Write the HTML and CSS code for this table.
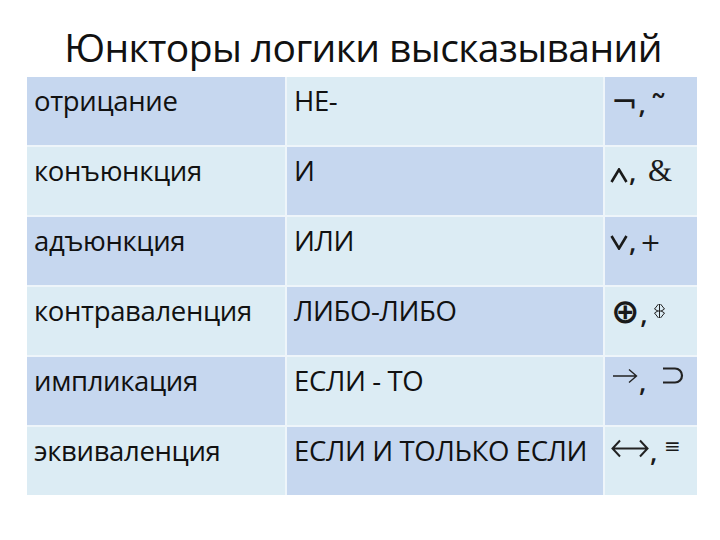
FILE: index.html
```html
<!DOCTYPE html>
<html lang="ru">
<head>
<meta charset="utf-8">
<link rel="stylesheet" href="styles.css">
</head>
<body>
<h1 class="title">Юнкторы логики высказываний</h1>
<div class="table">
  <div class="cell dark">отрицание</div>
  <div class="cell light">НЕ-</div>
  <div class="cell dark sym"><span class="s-not">¬</span><span class="comma">,</span><span class="s-tilde">˜</span></div>

  <div class="cell light">конъюнкция</div>
  <div class="cell dark">И</div>
  <div class="cell light sym"><svg class="s-and" width="18" height="15" viewBox="0 0 18 15"><path d="M1.5 14 L9 1.5 L16.5 14" fill="none" stroke="#1a1a1a" stroke-width="2.6"/></svg><span class="comma">,</span><span class="s-amp">&amp;</span></div>

  <div class="cell dark">адъюнкция</div>
  <div class="cell light">ИЛИ</div>
  <div class="cell dark sym"><svg class="s-or" width="18" height="15" viewBox="0 0 18 15"><path d="M1.5 1 L9 13.5 L16.5 1" fill="none" stroke="#1a1a1a" stroke-width="2.6"/></svg><span class="comma">,</span><span class="s-plus">+</span></div>

  <div class="cell light">контраваленция</div>
  <div class="cell dark">ЛИБО-ЛИБО</div>
  <div class="cell light sym"><span class="s-oplus">⊕</span><span class="comma">,</span><svg class="s-neq" width="13" height="16" viewBox="0 0 13 16"><path d="M5.5 1 L1.5 6 L5.5 8.5 M7.5 1 L11.5 6 L7.5 8.5 M5.5 7.5 L1.5 10 L5.5 15 M7.5 7.5 L11.5 10 L7.5 15 M6.5 1 L6.5 15" fill="none" stroke="#222" stroke-width="1"/></svg></div>

  <div class="cell dark">импликация</div>
  <div class="cell light">ЕСЛИ - ТО</div>
  <div class="cell dark sym"><svg class="s-arr" width="26" height="16" viewBox="0 0 26 16"><path d="M1 8 L24 8 M17 1.5 L24.5 8 L17 14.5" fill="none" stroke="#222" stroke-width="1.4"/></svg><span class="comma">,</span><svg class="s-sup" width="23" height="17" viewBox="0 0 23 17"><path d="M1 1.5 L13 1.5 A7 7 0 0 1 13 15.5 L1 15.5" fill="none" stroke="#222" stroke-width="2.2"/></svg></div>

  <div class="cell light">эквиваленция</div>
  <div class="cell dark">ЕСЛИ И ТОЛЬКО ЕСЛИ</div>
  <div class="cell light sym"><svg class="s-iff" width="38" height="19" viewBox="0 0 38 19"><path d="M9 1.5 L1.5 9.5 L9 17.5 M29 1.5 L36.5 9.5 L29 17.5 M1.5 9.5 L36.5 9.5" fill="none" stroke="#222" stroke-width="2"/></svg><span class="comma">,</span><span class="s-eq">≡</span></div>
</div>
</body>
</html>
```
FILE: styles.css
```css
html, body {
  margin: 0;
  padding: 0;
  background: #ffffff;
}
body {
  width: 720px;
  height: 540px;
  font-family: "Open Sans", "Noto Sans", sans-serif;
  color: #111;
}
.title {
  margin: 0;
  padding-top: 27px;
  height: 77px;
  box-sizing: border-box;
  font-weight: normal;
  font-size: 39px;
  line-height: 40px;
  text-align: center;
  padding-left: 6px;
  letter-spacing: -0.6px;
}
.table {
  margin-left: 27px;
  width: 670px;
  display: grid;
  grid-template-columns: 258px 316px 92px;
  grid-auto-rows: 68px;
  gap: 2px;
  background: #eef5fa;
}
.cell {
  font-size: 27.5px;
  line-height: 32px;
  padding: 8px 0 0 7px;
  letter-spacing: -0.35px;
  white-space: nowrap;
}
.dark { background: #c6d7ef; }
.light { background: #dcecf4; }
.sym {
  padding-left: 6px;
  font-family: "DejaVu Sans", sans-serif;
  font-size: 26px;
  color: #1a1a1a;
  display: flex;
  align-items: baseline;
}
.comma { font-family: "Open Sans", sans-serif; font-size: 27px; font-weight: 600; margin-left: 1px; }
.s-not { font-size: 32px; font-weight: normal; }
.s-tilde { font-size: 36px; margin-left: 4px; position: relative; top: 8px; }
.s-and { align-self: flex-start; margin-top: 13px; margin-left: -1px; }
.s-amp { font-family: "Liberation Serif", serif; font-size: 31px; margin-left: 12px; }
.s-or { align-self: flex-start; margin-top: 10px; margin-left: -1px; }
.s-plus { font-size: 25px; margin-left: 4px; }
.s-oplus { font-size: 34px; font-weight: bold; }
.s-neq { margin-left: 6px; align-self: flex-start; margin-top: 8px; }
.s-arr { align-self: flex-start; margin-top: 3px; margin-left: 1px; }
.s-sup { align-self: flex-start; margin-top: 2px; margin-left: 16px; }
.s-iff { align-self: flex-start; margin-top: 4px; }
.s-eq { font-size: 20px; margin-left: 7px; position: relative; top: -8px; }
```
